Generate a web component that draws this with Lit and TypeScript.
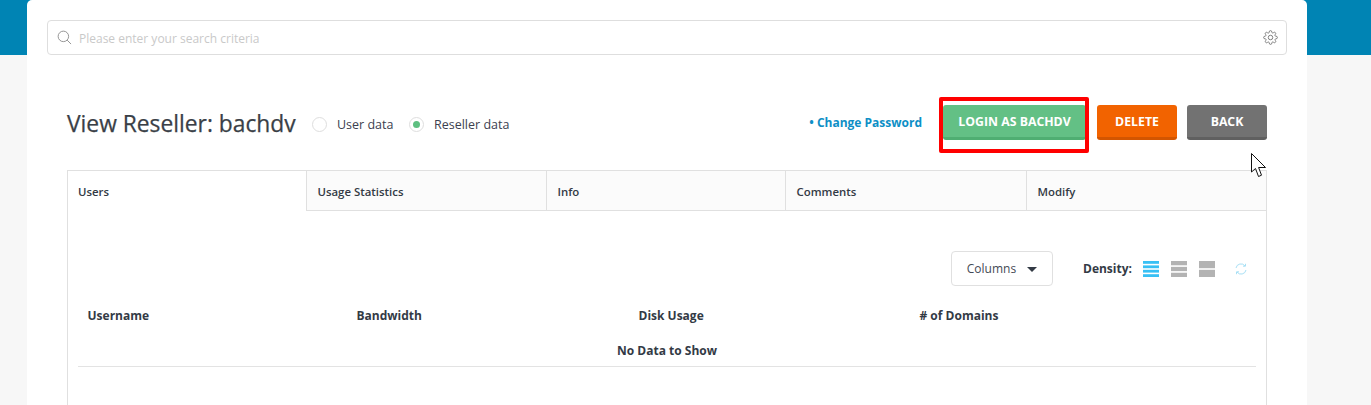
import { LitElement, html, css, svg } from "lit";
import { customElement } from "lit/decorators.js";

@customElement("app-root")
export class AppRoot extends LitElement {
  static styles = css`
    :host { display: block; width: 1371px; height: 405px; overflow: hidden; background: #f7f7f7; position: relative; font-family: "Open Sans", sans-serif; color: #333a45; }
    .banner { position: absolute; left: 0; top: 0; width: 100%; height: 55px; background: #0084b4; }
    .card { position: relative; margin: 0 64px 0 27px; width: 1280px; height: 405px; box-sizing: border-box; background: #fff; border-radius: 5px 5px 0 0; padding: 20px 20px 0; }
    .search { height: 35px; box-sizing: border-box; border: 1px solid #dedede; border-radius: 4px; display: flex; align-items: center; padding: 0 8px 0 9px; gap: 7px; }
    .search span { flex: 1; font-size: 12px; color: #c9c9c9; padding-top: 1px; }
    .search svg { display: block; }
    .head { display: flex; align-items: center; height: 35px; margin: 50px 20px 0 20px; }
    h1 { margin: 2px 0 0; font-size: 22.8px; font-weight: 400; color: #3a3f47; line-height: 35px; width: 245px; -webkit-text-stroke: .25px #3a3f47; white-space: nowrap; }
    .radio { display: flex; align-items: center; font-size: 12.5px; color: #3c4150; margin-top: 4px; }
    .radio i { width: 15px; height: 15px; box-sizing: border-box; border: 1px solid #dedede; border-radius: 50%; display: flex; align-items: center; justify-content: center; margin-right: 10px; }
    .radio i b { width: 7px; height: 7px; border-radius: 50%; background: #5dbf80; }
    .r1 { width: 97px; }
    .link { margin-left: auto; font-size: 12px; font-weight: 700; color: #0e8fc6; white-space: nowrap; }
    .btn { height: 35px; box-sizing: border-box; border-radius: 3px; border-bottom: 3px solid; color: #fff; font-size: 12.3px; font-weight: 700; display: flex; align-items: center; justify-content: center; padding-top: 1px; }
    .login { width: 143px; margin-left: 21px; background: #63c085; border-color: #4fae72; }
    .del { width: 80px; margin-left: 11px; background: #f26300; border-color: #d35500; }
    .back { width: 80px; margin-left: 10px; background: #727272; border-color: #606060; }
    .panel { margin: 30px 20px 0; width: 1200px; height: 240px; box-sizing: border-box; border: 1px solid #e0e0e0; border-width: 1px 1px 0 1px; }
    .tabs { display: flex; height: 40px; }
    .tab { box-sizing: border-box; flex: none; height: 40px; background: #fbfbfb; border-left: 1px solid #e0e0e0; border-bottom: 1px solid #e0e0e0; font-size: 11.4px; font-weight: 600; color: #333a45; display: flex; align-items: center; padding-left: 10.5px; padding-top: 1px; }
    .tab.active { background: #fff; border-left: 0; border-bottom: 0; padding: 0 0 0 10px; }
    .tools { display: flex; align-items: center; margin: 40px 0 0 0; height: 35px; padding-left: 883px; }
    .cols { width: 102px; height: 35px; box-sizing: border-box; border: 1px solid #e0e0e0; border-radius: 4px; display: flex; align-items: center; justify-content: center; gap: 11px; font-size: 12px; color: #444a55; padding-bottom: 1px; }
    .caret { width: 0; height: 0; margin-top: 2px; border-left: 5.5px solid transparent; border-right: 5.5px solid transparent; border-top: 5.5px solid #333a45; }
    .dlabel { margin-left: 30px; width: 60px; font-size: 12px; font-weight: 700; color: #333a45; padding-bottom: 1px; }
    .dens { display: flex; align-items: center; gap: 12px; }
    .dens svg, .refresh { display: block; }
    .refresh { margin-left: 20px; }
    .thead { display: grid; grid-template-columns: 269px 282px 281px 1fr; margin: 12px 10px 0; padding-left: 9.5px; height: 35px; align-items: center; font-size: 12px; font-weight: 700; color: #333a45; }
    .empty { margin: 0 10px; height: 34px; padding-top: 1px; border-bottom: 1px solid #e3e3e3; box-sizing: border-box; display: flex; align-items: center; justify-content: center; font-size: 12px; font-weight: 700; color: #333a45; }
    .mark { position: absolute; left: 912px; top: 97px; width: 150px; height: 56px; box-sizing: border-box; border: 4px solid #ff0000; border-radius: 2px; pointer-events: none; }
    .cursor { position: absolute; left: 1224px; top: 153px; display: block; }
  `;

  private bars(n: number, c: string) {
    const gap = 1.6;
    const h = (16 - gap * (n - 1)) / n;
    return html`<svg width="16" height="16" viewBox="0 0 16 16">
      ${Array.from({ length: n }, (_, i) => svg`<rect x="0" y=${i * (h + gap)} width="16" height=${h} fill=${c}></rect>`)}
    </svg>`;
  }

  render() {
    const tabs = [
      ["Users", 238, true],
      ["Usage Statistics", 240, false],
      ["Info", 239, false],
      ["Comments", 241, false],
      ["Modify", 240, false],
    ] as [string, number, boolean][];
    return html`
      <div class="banner"></div>
      <div class="card">
        <div class="search">
          <svg width="15" height="15" viewBox="0 0 16 16" fill="none" stroke="#8f8f8f" stroke-width="1"><circle cx="6.8" cy="6.8" r="5.6"></circle><path d="M10.8 10.8 15 15"></path></svg>
          <span>Please enter your search criteria</span>
          <svg width="15" height="15" viewBox="0 0 24 24" fill="none" stroke="#777" stroke-width="1.5" stroke-linejoin="round"><circle cx="12" cy="12" r="3.6"></circle><path d="M19.4 15a1.65 1.65 0 0 0 .33 1.82l.06.06a2 2 0 1 1-2.83 2.83l-.06-.06a1.65 1.65 0 0 0-2.82 1.17V21a2 2 0 0 1-4 0v-.09A1.65 1.65 0 0 0 7.2 19.74l-.06.06a2 2 0 1 1-2.83-2.83l.06-.06A1.65 1.65 0 0 0 3.2 14H3a2 2 0 0 1 0-4h.09A1.65 1.65 0 0 0 4.26 7.2l-.06-.06a2 2 0 1 1 2.83-2.83l.06.06A1.65 1.65 0 0 0 10 3.2V3a2 2 0 0 1 4 0v.09a1.65 1.65 0 0 0 2.82 1.17l.06-.06a2 2 0 1 1 2.83 2.83l-.06.06A1.65 1.65 0 0 0 20.8 10H21a2 2 0 0 1 0 4h-.09a1.65 1.65 0 0 0-1.51 1z"></path></svg>
        </div>
        <div class="head">
          <h1>View Reseller: bachdv</h1>
          <div class="radio r1"><i></i>User data</div>
          <div class="radio"><i><b></b></i>Reseller data</div>
          <div class="link">• Change Password</div>
          <div class="btn login">LOGIN AS BACHDV</div>
          <div class="btn del">DELETE</div>
          <div class="btn back">BACK</div>
        </div>
        <div class="panel">
          <div class="tabs">
            ${tabs.map(([t, w, a]) => html`<div class="tab ${a ? "active" : ""}" style="width:${w}px">${t}</div>`)}
          </div>
          <div class="tools">
            <div class="cols">Columns <span class="caret"></span></div>
            <div class="dlabel">Density:</div>
            <div class="dens">
              ${this.bars(4, "#38c0f4")}${this.bars(3, "#b3b3b3")}${this.bars(2, "#b3b3b3")}
            </div>
            <svg class="refresh" width="12" height="12" viewBox="0 0 12 12" fill="none" stroke="#a8e0f5" stroke-width="1"><path d="M1 5A5 5 0 0 1 10 3M11 7A5 5 0 0 1 2 9M10.5 .8V3.2H8M1.5 11.2V8.8H4"></path></svg>
          </div>
          <div class="thead"><div>Username</div><div>Bandwidth</div><div>Disk Usage</div><div># of Domains</div></div>
          <div class="empty">No Data to Show</div>
        </div>
        <div class="mark"></div>
        <svg class="cursor" width="17" height="25" viewBox="0 0 17 25"><path d="M.5.5V19L4.5 15.5 7.5 23.5 10.5 22.2 7.6 14.5H14.5Z" fill="#fff" stroke="#111" stroke-width="1"></path></svg>
      </div>
    `;
  }
}
